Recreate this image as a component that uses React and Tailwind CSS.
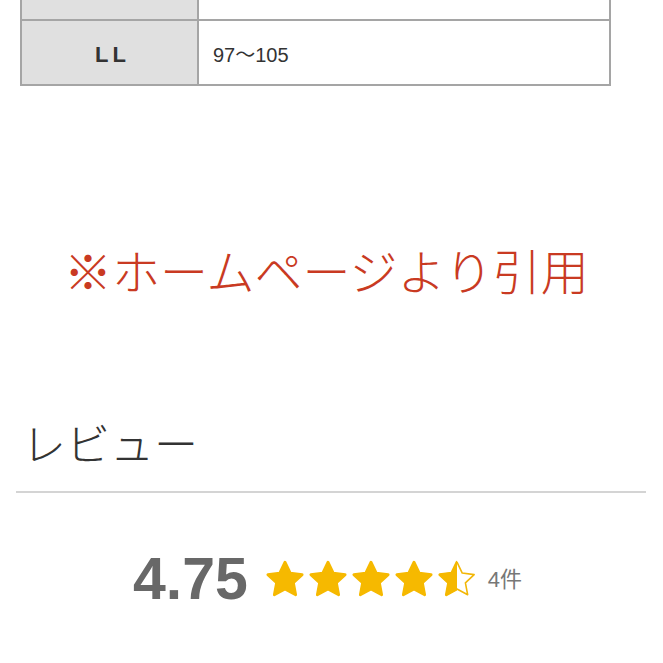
import React from "react";

const STAR = "M12 2.4l3 6.2 6.8.9-5 4.7 1.3 6.8L12 17.7l-6.1 3.3 1.3-6.8-5-4.7 6.8-.9z";

function Star({ half }) {
  return (
    <svg width="42" height="42" viewBox="0 0 24 24" className="block">
      <defs>
        <clipPath id="lefthalf">
          <rect x="0" y="0" width="12" height="24" />
        </clipPath>
      </defs>
      {half ? (
        <>
          <path d={STAR} fill="none" stroke="#f2b707" strokeWidth="0.9" strokeLinejoin="round" />
          <path d={STAR} fill="#f5b800" stroke="#f5b800" strokeWidth="1.6" strokeLinejoin="round" clipPath="url(#lefthalf)" />
        </>
      ) : (
        <path d={STAR} fill="#f6b900" stroke="#f6b900" strokeWidth="1.6" strokeLinejoin="round" />
      )}
    </svg>
  );
}

export default function App() {
  return (
    <div className="w-[663px] h-[663px] overflow-hidden bg-white" style={{ fontFamily: '"Liberation Sans", "Noto Sans CJK JP", sans-serif' }}>
      {/* table */}
      <div className="ml-[20px] w-[591px] border-x-2 border-b-2 border-[#a5a5a5]">
        <div className="grid grid-cols-[177px_1fr] h-[21px] border-b-2 border-[#a5a5a5]">
          <div className="bg-[#e0e0e0] border-r-2 border-[#a5a5a5]" />
          <div />
        </div>
        <div className="grid grid-cols-[177px_1fr] h-[63px]">
          <div className="bg-[#e0e0e0] border-r-2 border-[#a5a5a5] flex items-center justify-center text-[22px] font-bold text-[#333] tracking-[4px] pl-[6px] pt-[4px]">
            LL
          </div>
          <div className="flex items-center pl-[14px] pt-[4px] text-[20px] text-[#333]">
            97〜105
          </div>
        </div>
      </div>

      {/* red note */}
      <div
        className="mt-[159px] pl-[64px] h-[48px] leading-[48px] text-[48px] font-light text-[#c93a22] whitespace-nowrap"
        style={{ fontFamily: '"Noto Sans CJK JP", sans-serif' }}
      >
        ※ホームページより引用
      </div>

      {/* review heading */}
      <div
        className="mt-[127px] pl-[22px] h-[44px] leading-[44px] text-[44px] font-light text-[#333]"
        style={{ fontFamily: '"Noto Sans CJK JP", sans-serif' }}
      >
        レビュー
      </div>
      <div className="mt-[27px] ml-[16px] w-[630px] h-[2px] bg-[#d4d4d4]" />

      {/* rating */}
      <div className="mt-[64px] flex items-center pl-[133px]">
        <div className="text-[59px] leading-[44px] font-bold text-[#686868]">4.75</div>
        <div className="ml-[16px] flex items-center gap-[1px]">
          <Star />
          <Star />
          <Star />
          <Star />
          <Star half />
        </div>
        <div className="ml-[10px] text-[22px] text-[#777]">
          4件
        </div>
      </div>
    </div>
  );
}
